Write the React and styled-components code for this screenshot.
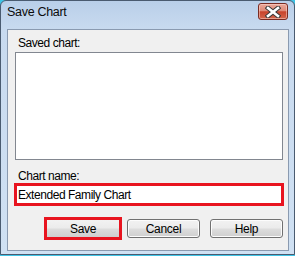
import React from "react";
import styled, { createGlobalStyle } from "styled-components";

const Global = createGlobalStyle`
  html, body { margin: 0; padding: 0; background: #3fc4e6; }
  * { box-sizing: border-box; }
`;

const Window = styled.div`
  width: 295px;
  height: 255px;
  display: flex;
  flex-direction: column;
  border: 1px solid #4a5b70;
  border-radius: 6px 6px 0 0;
  background: linear-gradient(#b9cfe9 0px, #c8daef 28px, #d0e1f3 100%);
  font-family: "Liberation Sans", Arial, sans-serif;
  overflow: hidden;
`;

const TitleBar = styled.div`
  height: 28px;
  flex: none;
  display: flex;
  justify-content: space-between;
  align-items: flex-start;
  padding: 0 6px 0 6px;
`;

const Title = styled.div`
  margin-top: 4px;
  font-size: 12.5px;
  line-height: 14px;
  color: #0b0b0b;
  letter-spacing: -0.3px;
`;

const CloseButton = styled.div`
  margin-top: 2px;
  width: 30px;
  height: 17px;
  border: 1px solid #7a2b22;
  border-radius: 3px;
  background: linear-gradient(#eba79a 0%, #de8a78 45%, #c8432b 52%, #d3664d 100%);
  box-shadow: inset 0 0 0 1px rgba(255, 220, 210, 0.5);
  display: flex;
  align-items: center;
  justify-content: center;
`;

const Client = styled.div`
  flex: 1;
  margin: 0 5px 3px 6px;
  border: 1px solid #8a9ab0;
  background: #f0f0f0;
  display: flex;
  flex-direction: column;
  padding: 6px 5px 0 6px;
`;

const Label = styled.div`
  font-size: 12px;
  line-height: 14px;
  color: #000;
  padding-left: 4px;
  letter-spacing: -0.45px;
  margin-top: ${(p) => p.$mt || 0}px;
`;

const ListBox = styled.div`
  margin: 2px 0 0 1px;
  width: 268px;
  height: 108px;
  background: #fff;
  border: 1px solid #828790;
`;

const InputFrame = styled.div`
  width: 270px;
  height: 23px;
  border: 3px solid #e8141f;
  background: #fff;
  display: flex;
  align-items: center;
  padding-left: 1px;
  font-size: 12px;
  color: #000;
  letter-spacing: -0.45px;
`;

const ButtonRow = styled.div`
  margin-top: 11px;
  display: flex;
  align-items: center;
  justify-content: flex-end;
  gap: 10px;
`;

const Highlight = styled.div`
  width: 78px;
  height: 23px;
  border: 3px solid #e8141f;
  margin-right: -5px;
  display: flex;
`;

const Button = styled.div`
  width: ${(p) => p.$w || 73}px;
  height: ${(p) => p.$h || 19}px;
  border: ${(p) => (p.$bare ? "none" : "1px solid #707070")};
  border-radius: ${(p) => (p.$bare ? 0 : 3)}px;
  background: linear-gradient(#f2f2f2 0%, #ebebeb 48%, #dddddd 52%, #cfcfcf 100%);
  box-shadow: ${(p) => (p.$bare ? "none" : "inset 0 0 0 1px #fcfcfc")};
  display: flex;
  align-items: center;
  justify-content: center;
  font-size: 12px;
  color: #000;
  letter-spacing: -0.3px;
`;

export default function App() {
  return (
    <>
      <Global />
      <Window>
        <TitleBar>
          <Title>Save Chart</Title>
          <CloseButton>
            <svg width="16" height="12" viewBox="0 0 16 12">
              <path d="M3 2 L13 10 M13 2 L3 10" stroke="#3a3a3a" strokeWidth="4.6" strokeLinecap="square" />
              <path d="M3 2 L13 10 M13 2 L3 10" stroke="#ffffff" strokeWidth="2.6" strokeLinecap="square" />
            </svg>
          </CloseButton>
        </TitleBar>
        <Client>
          <Label>Saved chart:</Label>
          <ListBox />
          <Label $mt={9}>Chart name:</Label>
          <InputFrame>Extended Family Chart</InputFrame>
          <ButtonRow>
            <Highlight>
              <Button $bare $w={72} $h={17}>Save</Button>
            </Highlight>
            <Button>Cancel</Button>
            <Button>Help</Button>
          </ButtonRow>
        </Client>
      </Window>
    </>
  );
}
